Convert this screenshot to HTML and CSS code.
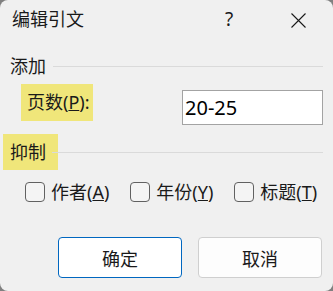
FILE: index.html
```html
<!DOCTYPE html>
<html lang="zh-CN">
<head>
    <meta charset="UTF-8">
    <title>编辑引文</title>
    <link rel="stylesheet" href="styles.css">
</head>
<body>
    <div class="window">
        <div class="titlebar">
            <span class="title">编辑引文</span>
            <span class="help">?</span>
            <span class="close">
                <svg width="15" height="15" viewBox="0 0 15 15">
                    <path d="M0.5 0.5 L14.5 14.5 M14.5 0.5 L0.5 14.5" stroke="#1a1a1a" stroke-width="1.1" fill="none"/>
                </svg>
            </span>
        </div>

        <div class="group-head first">
            <span class="group-name">添加</span>
            <span class="rule"></span>
        </div>
        <div class="field-row">
            <span class="field-label mark">页数(<u>P</u>):</span>
            <input class="field-input" type="text" value="20-25">
        </div>

        <div class="group-head second">
            <span class="group-name mark">抑制</span>
            <span class="rule overlap"></span>
        </div>
        <div class="checks">
            <label class="check"><span class="box"></span><span class="check-text">作者(<u>A</u>)</span></label>
            <label class="check"><span class="box"></span><span class="check-text">年份(<u>Y</u>)</span></label>
            <label class="check"><span class="box"></span><span class="check-text">标题(<u>T</u>)</span></label>
        </div>

        <div class="buttons">
            <button class="btn btn-primary">确定</button>
            <button class="btn">取消</button>
        </div>
    </div>
</body>
</html>
```

FILE: styles.css
```css
html, body {
    margin: 0;
    padding: 0;
    background-color: #808080;
}
body {
    font-family: "Noto Sans", "Noto Sans CJK SC", sans-serif;
    font-size: 18px;
    color: #1a1a1a;
}
.window {
    width: 333px;
    height: 291px;
    box-sizing: border-box;
    background-color: #f0f0f0;
    border-radius: 8px;
    overflow: hidden;
}
.titlebar {
    display: flex;
    align-items: center;
    height: 38px;
    padding-left: 12px;
}
.title {
    flex: 1;
    line-height: 24px;
}
.help {
    width: 46px;
    text-align: center;
    margin-right: 23px;
    color: #1a1a1a;
    font-size: 19px;
}
.close {
    width: 46px;
    height: 38px;
    margin-right: 12px;
    display: flex;
    align-items: center;
    justify-content: center;
}
.close svg {
    display: block;
    margin-top: 2px;
}
.group-head {
    display: flex;
    align-items: center;
    padding-right: 10px;
}
.group-head.first {
    margin-top: 18px;
    padding-left: 10px;
    line-height: 20px;
}
.group-head.second {
    margin-top: 9px;
    padding-left: 3px;
}
.group-name {
    line-height: 20px;
}
.rule {
    flex: 1;
    height: 1px;
    background-color: #dadada;
    margin-left: 7px;
}
.rule.overlap {
    margin-left: -6px;
}
.mark {
    background-color: #f0e67a;
}
.group-head.second .group-name {
    line-height: 36px;
    padding: 0 12px 0 7px;
}
.field-row {
    display: flex;
    align-items: flex-start;
    margin-top: 8px;
    padding-right: 10px;
}
.field-label {
    margin-left: 21px;
    width: 72px;
    height: 37px;
    line-height: 37px;
    box-sizing: border-box;
    padding-left: 6px;
    white-space: nowrap;
}
.field-input {
    margin-left: auto;
    margin-top: 6px;
    width: 141px;
    height: 35px;
    box-sizing: border-box;
    border: 1px solid #a3a3a3;
    background: #fff;
    font-family: "Noto Sans", sans-serif;
    font-size: 20px;
    color: #000;
    padding: 0 2px;
    outline: none;
}
.checks {
    display: flex;
    gap: 21px;
    margin-top: 10px;
    padding-left: 25px;
    height: 24px;
    align-items: center;
}
.check {
    display: flex;
    align-items: center;
    gap: 6px;
    line-height: 24px;
}
.check-text {
    white-space: nowrap;
}
.box {
    flex: none;
    width: 20px;
    height: 20px;
    box-sizing: border-box;
    border: 1px solid #616161;
    border-radius: 4px;
    background-color: #f4f4f4;
}
.buttons {
    display: flex;
    gap: 16px;
    margin-top: 33px;
    padding-left: 58px;
}
.btn {
    width: 124px;
    height: 41px;
    box-sizing: border-box;
    border: 1px solid #cfcfcf;
    border-radius: 4px;
    background-color: #fdfdfd;
    font-family: "Noto Sans", "Noto Sans CJK SC", sans-serif;
    font-size: 18px;
    color: #1a1a1a;
    padding: 0;
}
.btn-primary {
    border-color: #0067c0;
    background-color: #fff;
}
```
